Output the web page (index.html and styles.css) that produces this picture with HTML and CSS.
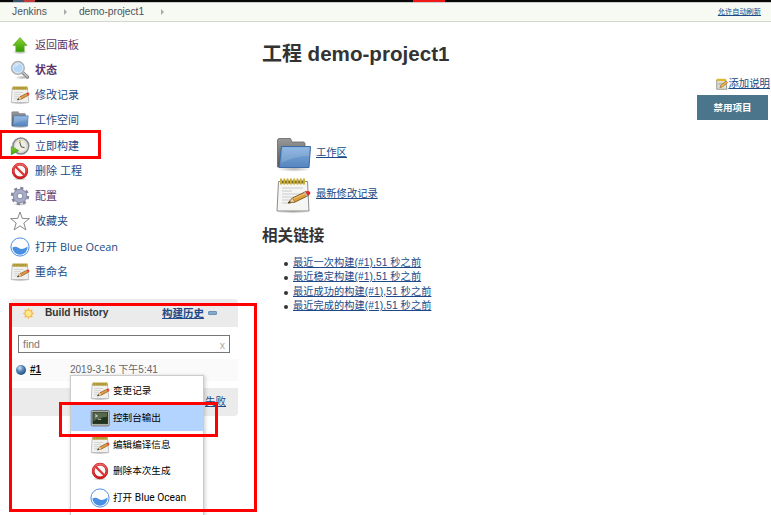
FILE: index.html
```html
<!DOCTYPE html>
<html lang="zh-CN">
<head>
<meta charset="utf-8">
<title>demo-project1 [Jenkins]</title>
<link rel="stylesheet" href="styles.css">
</head>
<body>
<svg class="defs" width="0" height="0">
  <defs>
    <linearGradient id="green" x2="0" y2="1"><stop stop-color="#8bd32f"/><stop offset="1" stop-color="#359b05"/></linearGradient>
    <linearGradient id="blue" x2="0" y2="1"><stop stop-color="#82aee0"/><stop offset="1" stop-color="#5585bd"/></linearGradient>
    <linearGradient id="grey" x2="0" y2="1"><stop stop-color="#999"/><stop offset="1" stop-color="#555"/></linearGradient>
    <linearGradient id="red" x2="0" y2="1"><stop stop-color="#ee6060"/><stop offset="1" stop-color="#cc1c1c"/></linearGradient>
    <radialGradient id="ball" cx=".38" cy=".3" r=".7"><stop stop-color="#d4e6f6"/><stop offset=".45" stop-color="#5b8dbe"/><stop offset="1" stop-color="#234f80"/></radialGradient>
    <radialGradient id="shade"><stop stop-color="#000" stop-opacity=".3"/><stop offset="1" stop-color="#000" stop-opacity="0"/></radialGradient>
    <symbol id="up" viewBox="0 0 24 24">
      <ellipse cx="12" cy="20.5" rx="9" ry="3" fill="url(#shade)"/>
      <path d="M12 3 20.500 12.500H17V20H7V12.500H3.500Z" fill="url(#green)" stroke="#5aa526" stroke-width=".8"/>
    </symbol>
    <symbol id="search" viewBox="0 0 24 24">
      <ellipse cx="15" cy="21" rx="9" ry="2.5" fill="url(#shade)"/>
      <path d="m15 15 6 5.5" stroke="#858585" stroke-width="4" stroke-linecap="round"/>
      <path d="m15.500 15 5.500 5" stroke="#ccc" stroke-width="1.5" stroke-linecap="round"/>
      <circle cx="9.500" cy="9.500" r="7.500" fill="#a9cdf2" stroke="#b0b2b4" stroke-width="2"/>
      <circle cx="9.500" cy="9.500" r="6" fill="#b6d6f5" stroke="#edf4fa"/>
      <path d="M5.500 9c.5-3 3-4.500 6-3.800C9 6 7 7 5.500 9" fill="#fff"/>
    </symbol>
    <symbol id="note" viewBox="0 0 24 24">
      <ellipse cx="12" cy="21.500" rx="12" ry="2" fill="url(#shade)"/>
      <path d="M2.500 4h18.500l1.500 17H1.500Z" fill="#f0f0ee" stroke="#aaa" stroke-width=".8"/>
      <path d="M5 9h11M5 11.500h8M5 14h6M5 16.500h5" stroke="#c9c9c9" stroke-width=".8"/>
      <path d="M3 2h18v3.500H3Z" fill="#9e8424"/>
      <path d="M4.500 1.500v4M7 1.500v4M9.500 1.500v4M12 1.500v4M14.500 1.500v4M17 1.500v4M19.500 1.500v4" stroke="#d6c05c" stroke-width="1"/>
      <path d="m8.500 18 3.500-4 9-4.500 1.500 2.500-9 5Z" fill="#e39a42" stroke="#855018" stroke-width=".8"/>
      <path d="m8.500 18 3.500-4 1.500 3Z" fill="#e8cf9e"/><path d="m8.500 18 1.700-2 .9 1.400Z" fill="#222"/>
      <path d="m20 10 1.700-.9q2 0 1.500 2.500l-1.700.9Z" fill="#e7473c"/>
    </symbol>
    <symbol id="notebook" viewBox="0 0 36 36">
      <ellipse cx="17" cy="33.500" rx="17" ry="2.200" fill="url(#shade)"/>
      <path d="M2.500 3.500h29l1.500 29.500H1Z" fill="#f5f5f4" stroke="#8d8d8b"/>
      <path d="M6 10h21M6 13h10M6 16h21M6 19h16M6 22h10M6 25h9" stroke="#c6c6c6" stroke-width=".9"/>
      <path d="M4 2.500h25v3H4Z" fill="#73601b"/>
      <path d="M5 1.200v4.600M8.300 1.200v4.600M11.600 1.200v4.600M14.900 1.200v4.600M18.200 1.200v4.600M21.500 1.200v4.600M24.800 1.200v4.600M28 1.200v4.600" stroke="#c9b037" stroke-width="2" stroke-linecap="round"/>
      <path d="m12 25 4.500-5L30 13.500l2.500 4L19 24Z" fill="#dda03c" stroke="#7c5014" stroke-width=".9"/>
      <path d="m17 21 13-6" stroke="#f1c67c"/>
      <path d="m12 25 4.500-5 2.500 4Z" fill="#ebcf9f" stroke="#7c5014" stroke-width=".5"/><path d="m12 25 2-2 .9 1.400Z" fill="#222"/>
      <path d="m29 14 2-1q3-.5 3.500 2 0 1.500-3 3Z" fill="#e22c2c"/><path d="m28 14.500 1.500-.7 2.200 4-1.500.7Z" fill="#b8b8b8"/>
    </symbol>
    <symbol id="folder" viewBox="0 0 36 36">
      <ellipse cx="18" cy="32" rx="17" ry="2.800" fill="url(#shade)"/>
      <path d="M1.500 30V3l1-1.500h12L16 5h12l1 1.500V30Z" fill="url(#grey)" stroke="#666" stroke-width=".8"/>
      <path d="M5.500 9.500h29L33 30.500H3Z" fill="url(#blue)" stroke="#3c6ba5"/>
      <path d="M6.500 10.500h27l-.6 8Q18 19 5.500 26Z" fill="#fff" opacity=".14"/>
    </symbol>
    <symbol id="clock" viewBox="0 0 24 24">
      <circle cx="13" cy="12" r="9.500" fill="#eeeee5" stroke="#85868f" stroke-width="1.800"/>
      <circle cx="13" cy="12" r="7.500" fill="none" stroke="#c9c9bd"/>
      <path d="m13.500 13-2-6M13.500 13l4 1" stroke="#333" stroke-width="1"/><path d="m11 5 2 2" stroke="#d9b52e" stroke-width="1.500"/>
      <path d="m1.500 12.500 9 5-9 5Z" fill="url(#green)" stroke="#379113" stroke-width=".7"/>
    </symbol>
    <symbol id="stop" viewBox="0 0 24 24">
      <ellipse cx="12" cy="21.500" rx="9" ry="2" fill="url(#shade)"/>
      <circle cx="12" cy="12" r="8.200" fill="#fafafa" stroke="#c01b1b" stroke-width="3.200"/>
      <circle cx="12" cy="12" r="8.200" fill="none" stroke="url(#red)" stroke-width="2.300"/>
      <path d="m6.300 6.300 11.400 11.400" stroke="#dc3434" stroke-width="2.800"/>
    </symbol>
    <symbol id="gear" viewBox="0 0 24 24">
      <ellipse cx="12" cy="22" rx="9" ry="1.800" fill="url(#shade)"/>
      <circle cx="12" cy="12" r="9.300" fill="none" stroke="#858799" stroke-width="3.400" stroke-dasharray="3.650 3.654"/>
      <circle cx="12" cy="12" r="5.700" fill="none" stroke="#8d92ae" stroke-width="6"/>
      <circle cx="12" cy="12" r="5.700" fill="none" stroke="#a8aec8" stroke-width="3.500"/>
    </symbol>
    <symbol id="star" viewBox="0 0 24 24">
      <path d="m12 1.200 2.800 7.700 8.400.3-6.600 5.200 2.400 8.200-7-4.700-7 4.700 2.400-8.200L.8 9.200l8.400-.3Z" fill="#fcfcfc" stroke="#62645f" stroke-width=".9" stroke-linejoin="round"/>
    </symbol>
    <symbol id="ocean" viewBox="0 0 24 24">
      <circle cx="12" cy="12" r="10.900" fill="#fff" stroke="#4a90e2" stroke-width="1.200"/>
      <path d="M2.800 12.500c3-1.500 6-.8 8.300 1s6 1 10.100-2A9.200 9.200 0 0 1 2.800 12.500" fill="#4a90e2"/>
    </symbol>
    <symbol id="terminal" viewBox="0 0 24 24">
      <rect x="1.500" y="3" width="21.500" height="18.500" rx="1.500" fill="#dadad6" stroke="#555753"/>
      <rect x="3.500" y="5" width="17.500" height="14" fill="#23341e" stroke="#1d2719"/>
      <path d="M4 5.500h16.500v5Q12 11 4 16Z" fill="#55694e"/>
      <path d="m6 8 3 1.500-3 1.500M9.500 13.500h4" fill="none" stroke="#dfead7"/>
    </symbol>
    <symbol id="sun" viewBox="0 0 16 16">
      <path d="m8 1 1.500 2.600L12.900 3l-.5 3.400L15 8l-2.600 1.600.5 3.400-3.400-.6L8 15l-1.500-2.600-3.400.6.500-3.400L1 8l2.600-1.600L3.100 3l3.400.6Z" fill="#f6b54c"/>
      <circle cx="8" cy="8" r="4" fill="#ffe98c" stroke="#f4b94c" stroke-width=".7"/>
    </symbol>
    <symbol id="ball-blue" viewBox="0 0 12 12"><circle cx="6" cy="6" r="5" fill="url(#ball)"/></symbol>
    <symbol id="edit" viewBox="0 0 16 16">
      <path d="M1 2.500h12l1.500 12.500H1Z" fill="#e1e2d4" stroke="#777b70"/>
      <path d="M1 2.500h12" stroke="#dfb928" stroke-width="3"/><path d="M3 7h8M3 9h4" stroke="#a6aa9c"/>
      <path d="m5 13 2-4 6.500-5 2 2-6.500 5.500Z" fill="#eeb453" stroke="#8c6020" stroke-width=".8"/>
    </symbol>
  </defs>
</svg>

<div class="topstrip"><i class="logo"></i><i class="alert"></i></div>
<header class="crumbs">
  <a>Jenkins</a><i class="sep"></i><a class="project">demo-project1</a><i class="sep"></i>
  <a class="refresh">允许自动刷新</a>
</header>

<div class="page">
  <aside class="side">
    <nav class="tasks">
      <a class="visited"><svg><use href="#up"/></svg>返回面板</a>
      <a class="visited current"><svg><use href="#search"/></svg>状态</a>
      <a><svg><use href="#note"/></svg>修改记录</a>
      <a><svg class="small"><use href="#folder"/></svg>工作空间</a>
      <a><svg><use href="#clock"/></svg>立即构建</a>
      <a><svg><use href="#stop"/></svg>删除 工程</a>
      <a class="visited"><svg><use href="#gear"/></svg>配置</a>
      <a><svg><use href="#star"/></svg>收藏夹</a>
      <a><svg><use href="#ocean"/></svg>打开&nbsp;<span class="latin">Blue Ocean</span></a>
      <a><svg><use href="#note"/></svg>重命名</a>
    </nav>
    <section class="history">
      <div class="history-head"><svg><use href="#sun"/></svg><b>Build History</b><a>构建历史</a><i class="collapse"></i></div>
      <div class="find"><span>find</span><span class="clear">x</span></div>
      <div class="build"><svg><use href="#ball-blue"/></svg><a>#1</a><span>2019-3-16 下午5:41</span></div>
      <div class="history-foot"><a>失败</a></div>
      <div class="menu">
        <a><svg><use href="#note"/></svg>变更记录</a>
        <a class="selected"><svg><use href="#terminal"/></svg>控制台输出</a>
        <a><svg><use href="#note"/></svg>编辑编译信息</a>
        <a><svg><use href="#stop"/></svg>删除本次生成</a>
        <a><svg><use href="#ocean"/></svg>打开&nbsp;<span class="latin">Blue Ocean</span></a>
      </div>
    </section>
  </aside>
  <main class="main">
    <h1>工程 <span>demo-project1</span></h1>
    <div class="actions">
      <a class="describe"><svg><use href="#edit"/></svg><span>添加说明</span></a>
      <button>禁用项目</button>
    </div>
    <div class="links">
      <div><svg><use href="#folder"/></svg><a>工作区</a></div>
      <div><svg><use href="#notebook"/></svg><a>最新修改记录</a></div>
    </div>
    <h2>相关链接</h2>
    <ul>
      <li><a>最近一次构建(#1),51 秒之前</a></li>
      <li><a>最近稳定构建(#1),51 秒之前</a></li>
      <li><a>最近成功的构建(#1),51 秒之前</a></li>
      <li><a>最近完成的构建(#1),51 秒之前</a></li>
    </ul>
  </main>
</div>
<div class="mark mark-build"></div>
<div class="mark mark-history"></div>
<div class="mark mark-console"></div>
</body>
</html>
```
FILE: styles.css
```css
* { box-sizing: border-box; }
body {
  margin: 0;
  height: 515px;
  overflow: hidden;
  position: relative;
  background: #fff;
  color: #333;
  font: 11px/14px "Liberation Sans", "Noto Sans CJK SC", sans-serif;
}
svg { flex: none; display: block; }
.defs { position: absolute; }
a { color: #204a87; white-space: nowrap; }

.topstrip { height: 2px; background: #080808; display: flex; }
.logo { width: 22px; margin-left: 13px; background: linear-gradient(90deg, #355268 50%, #c43c3c 50%); }
.alert { width: 32px; margin-left: 378px; background: #f21818; }

.crumbs {
  height: 20px;
  display: flex;
  align-items: center;
  padding: 0 10px 0 12px;
  background: #f6faf2;
  border-top: 1px solid #ccc;
  border-bottom: 1px solid #d3d7cf;
}
.crumbs a { color: #4d545d; font-size: 10.3px; }
.sep { border: 3px solid transparent; border-left-color: #aaa; border-right: 0; margin: 0 12px 0 17px; }
.crumbs .project { letter-spacing: -.05px; }
.crumbs .refresh { margin-left: auto; font-size: 7.2px; color: #204a87; text-decoration: underline; }

.page { display: flex; }
.side { width: 262px; flex: none; padding-top: 10px; }
.tasks a { height: 25.25px; display: flex; align-items: center; padding-left: 10px; }
.tasks svg { width: 20px; height: 20px; margin-right: 5px; }
.tasks svg.small { width: 18px; height: 18px; margin: 0 6px 0 1px; }
.tasks .visited { color: #5c3566; }
.tasks .current { font-weight: bold; }
.latin { font-family: "Open Sans", sans-serif; font-size: 10.9px; }

.history { width: 228px; height: 117px; margin: 14.5px 0 0 10px; position: relative; }
.history-head {
  height: 28px;
  display: flex;
  align-items: center;
  padding-left: 12px;
  background: #ebebeb;
  border-radius: 4px 4px 0 0;
}
.history-head svg { width: 13px; height: 13px; margin-right: 10px; }
.history-head b { font-size: 10.2px; width: 117px; }
.history-head a { font-size: 10.5px; font-weight: bold; text-decoration: underline; }
.collapse { width: 9px; height: 4px; margin-left: 4px; background: #82a9d0; border: 1px solid #6c91b7; border-radius: 1px; }
.find {
  height: 18px;
  margin: 8px;
  display: flex;
  align-items: center;
  justify-content: space-between;
  padding: 0 4px;
  border: 1px solid #777;
  background: #fff;
  color: #777;
  font-size: 10.5px;
}
.clear { color: #aaa; padding-top: 2px; }
.build {
  height: 22px;
  margin-top: -2px;
  display: flex;
  align-items: center;
  padding-left: 5px;
  background: #fafafa;
  font-size: 10px;
  color: #666;
}
.build svg { width: 12px; height: 12px; }
.build a { width: 43px; padding-left: 3px; color: #111; font-weight: bold; text-decoration: underline; }
.history-foot {
  height: 28px;
  margin-top: 7px;
  display: flex;
  align-items: center;
  justify-content: flex-end;
  padding: 0 12px 2px 0;
  background: #ebebeb;
  border-radius: 0 0 4px 4px;
}
.history-foot a { font-size: 10.5px; text-decoration: underline; }
.menu {
  position: absolute;
  left: 60px;
  top: 76px;
  width: 134px;
  height: 160px;
  padding-top: 2px;
  background: #fff;
  border: 1px solid #ccc;
  box-shadow: 1px 1px 4px rgba(0, 0, 0, .22);
}
.menu a {
  height: 26.7px;
  display: flex;
  align-items: center;
  padding-left: 19px;
  color: #000;
  font-size: 9.6px;
}
.menu svg { width: 20px; height: 20px; margin-right: 3px; }
.menu .selected { background: #b3d4ff; }
.menu .latin { font-family: Roboto, sans-serif; font-size: 10.2px; }

.main { flex: 1; padding-top: 19px; }
h1 { margin: 0; font-size: 20px; line-height: 26px; }
h1 span { font-size: 20.6px; }
.actions { display: flex; flex-direction: column; align-items: flex-end; margin-top: 10px; }
.describe { display: flex; align-items: center; padding-right: 1px; font-size: 10.4px; }
.describe span { text-decoration: underline; }
.describe svg { width: 12px; height: 12px; }
button {
  width: 71px;
  height: 25px;
  margin: 4px 3px 0 0;
  padding: 0 0 1px;
  border: 0;
  background: #4b758b;
  color: #fff;
  font: bold 9.5px "Liberation Sans", "Noto Sans CJK SC", sans-serif;
}
.links { margin: 14px 0 0 14px; }
.links div { display: flex; align-items: center; height: 41px; }
.links svg { width: 36px; height: 36px; margin-right: 4px; }
.links a { font-size: 10.3px; text-decoration: underline; padding-bottom: 4px; }
h2 { margin: 9px 0 0; font-size: 15.6px; line-height: 22px; }
ul { margin: 9px 0 0; padding-left: 22px; list-style: none; }
li { height: 14.4px; line-height: 14px; font-size: 10.2px; display: flex; }
li::before { content: ""; width: 4px; height: 4px; margin: 6px 5px 0 0; border-radius: 50%; background: #333; }
li a { text-decoration: underline; letter-spacing: .08px; }

.mark { position: absolute; border: 3px solid #f00; }
.mark-build { left: -1px; top: 130px; width: 102px; height: 29px; }
.mark-history { left: 9px; top: 303px; width: 248px; height: 209px; }
.mark-console { left: 59px; top: 402px; width: 159px; height: 35px; }
```
